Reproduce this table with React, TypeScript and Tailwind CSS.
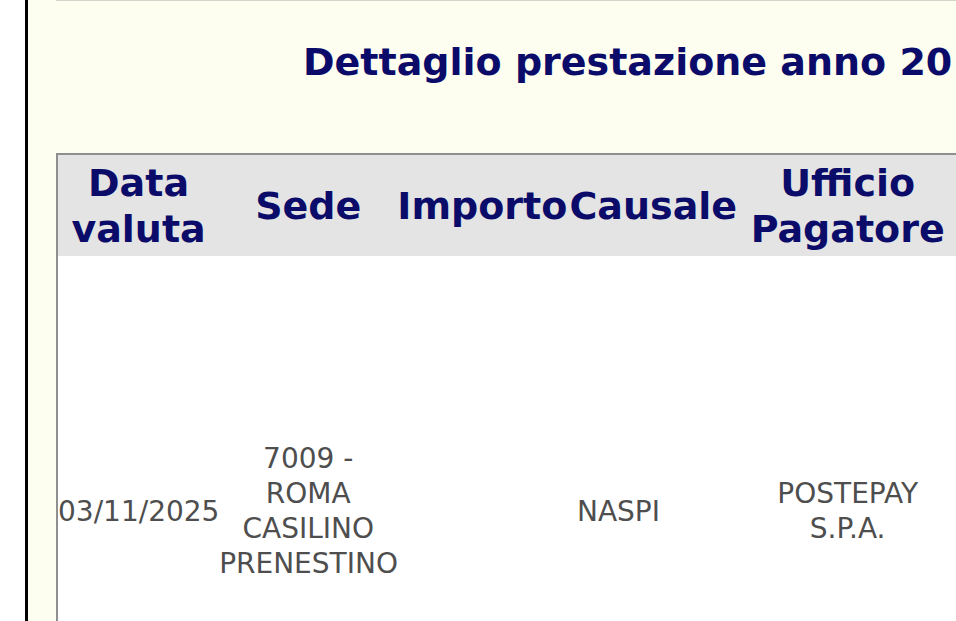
import React from 'react';

const navy = 'text-[#0b0b69]';

export default function App() {
    return (
        <div className="w-[956px] h-[621px] overflow-hidden bg-white" style={{ fontFamily: '"DejaVu Sans", Verdana, sans-serif' }}>
            <div className="ml-[25px] h-full border-l-[3px] border-black bg-[#fdfdf0] pl-[28px] overflow-hidden">
                <div className="border-t border-[#d4d4cc] w-[1200px]" />

                <h1 className={`mt-[38px] ml-[247px] whitespace-nowrap text-[38px] leading-[46px] font-bold ${navy}`}>
                    Dettaglio prestazione anno 20
                </h1>

                <table className="mt-[68px] w-[1092px] min-w-[1092px] border-t-2 border-l-2 border-[#8f8f8f] bg-white table-fixed border-collapse">
                    <colgroup>
                        <col className="w-[162px]" />
                        <col className="w-[178px]" />
                        <col className="w-[170px]" />
                        <col className="w-[180px]" />
                        <col className="w-[200px]" />
                        <col className="w-[200px]" />
                    </colgroup>
                    <thead>
                        <tr className="bg-[#e4e4e4] h-[102px]">
                            <th className={`p-0 text-[38px] leading-[46px] font-bold ${navy} text-center align-middle`}>Data<br />valuta</th>
                            <th className={`p-0 text-[38px] leading-[46px] font-bold ${navy} text-center align-middle`}>Sede</th>
                            <th className={`p-0 text-[38px] leading-[46px] font-bold ${navy} text-center align-middle`}>Importo</th>
                            <th className={`p-0 pl-[2px] text-[38px] leading-[46px] font-bold ${navy} text-left align-middle`}>Causale</th>
                            <th className={`p-0 text-[38px] leading-[46px] font-bold ${navy} text-center align-middle`}>Ufficio<br />Pagatore</th>
                            <th className="p-0" />
                        </tr>
                    </thead>
                    <tbody>
                        <tr className="h-[510px] text-[28px] leading-[35px] text-[#4e4e4e]">
                            <td className="p-0 text-center align-middle">03/11/2025</td>
                            <td className="p-0 text-center align-middle">7009 -<br />ROMA<br />CASILINO<br />PRENESTINO</td>
                            <td className="p-0 text-center align-middle"></td>
                            <td className="p-0 pr-[78px] text-center align-middle">NASPI</td>
                            <td className="p-0 text-center align-middle">POSTEPAY<br />S.P.A.</td>
                            <td className="p-0" />
                        </tr>
                    </tbody>
                </table>
            </div>
        </div>
    );
}
